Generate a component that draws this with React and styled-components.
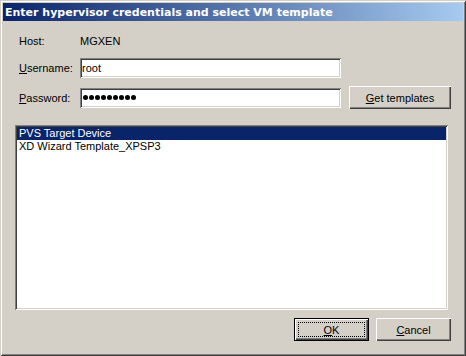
import React from 'react'
import styled, { createGlobalStyle } from 'styled-components'

const GlobalStyle = createGlobalStyle`
  html, body {
    margin: 0;
    padding: 0;
    background: #D4D0C8;
  }
  body {
    font-family: Tahoma, "Liberation Sans", Arial, sans-serif;
    font-size: 11px;
    color: #000;
  }
`

const Window = styled.div`
  width: 466px;
  height: 356px;
  box-sizing: border-box;
  padding: 3px;
  background: #D4D0C8;
  box-shadow:
    inset 1px 1px #D4D0C8,
    inset -1px -1px #404040,
    inset 2px 2px #FFFFFF,
    inset -2px -2px #808080;
  display: flex;
  flex-direction: column;
`

const TitleBar = styled.div`
  height: 18px;
  flex: none;
  display: flex;
  align-items: center;
  padding-left: 2px;
  background: linear-gradient(to right, #0A246A, #A6CAF0);
  color: #fff;
  font-family: "DejaVu Sans", Verdana, sans-serif;
  font-weight: 700;
  font-size: 11px;
  white-space: nowrap;
`

const Body = styled.div`
  flex: 1;
  display: flex;
  flex-direction: column;
  padding: 10px 12px 12px 12px;
`

const Row = styled.div`
  display: flex;
  align-items: center;
  height: ${({ h }) => h || 20}px;
  padding-left: 4px;
  margin-bottom: ${({ mb }) => mb || 0}px;
`

const Label = styled.div`
  width: 61px;
  flex: none;
`

const Field = styled.div`
  width: 261px;
  height: 20px;
  box-sizing: border-box;
  background: #fff;
  padding: 0 2px;
  display: flex;
  align-items: center;
  box-shadow:
    inset 1px 1px #808080,
    inset -1px -1px #FFFFFF,
    inset 2px 2px #404040,
    inset -2px -2px #D4D0C8;
`

const Dots = styled.span`
  display: flex;
  gap: 1px;
  padding-left: 1px;
`

const Dot = styled.i`
  width: 5px;
  height: 5px;
  border-radius: 50%;
  background: #000;
`

const Button = styled.button`
  position: relative;
  width: ${({ w }) => w || 75}px;
  height: 23px;
  box-sizing: border-box;
  margin: 0;
  padding: 0;
  background: #D4D0C8;
  font-family: inherit;
  font-size: 11px;
  color: #000;
  border: ${({ isDefault }) => (isDefault ? '1px solid #000' : 'none')};
  box-shadow:
    inset 1px 1px #FFFFFF,
    inset -1px -1px #404040,
    inset -2px -2px #808080;
  display: flex;
  align-items: center;
  justify-content: center;
  cursor: default;

  &::after {
    content: '';
    display: ${({ isDefault }) => (isDefault ? 'block' : 'none')};
    position: absolute;
    left: 3px;
    top: 3px;
    right: 3px;
    bottom: 3px;
    border: 1px dotted #000;
  }
`

const GetButton = styled(Button)`
  margin-left: 8px;
`

const ListBox = styled.div`
  height: 185px;
  margin-top: 16px;
  margin-right: 3px;
  box-sizing: border-box;
  padding: 2px;
  background: #fff;
  box-shadow:
    inset 1px 1px #808080,
    inset -1px -1px #FFFFFF,
    inset 2px 2px #404040,
    inset -2px -2px #D4D0C8;
`

const Item = styled.div`
  height: 13px;
  line-height: 13px;
  padding-left: 2px;
  white-space: nowrap;
  background: ${({ selected }) => (selected ? '#0A246A' : 'transparent')};
  color: ${({ selected }) => (selected ? '#fff' : '#000')};
`

const Footer = styled.div`
  display: flex;
  justify-content: flex-end;
  gap: 7px;
  margin-top: 8px;
`

const templates = ['PVS Target Device', 'XD Wizard Template_XPSP3']

export default function App() {
  return (
    <>
      <GlobalStyle />
      <Window>
        <TitleBar>Enter hypervisor credentials and select VM template</TitleBar>
        <Body>
          <Row mb={7}>
            <Label>Host:</Label>
            <div>MGXEN</div>
          </Row>
          <Row mb={8}>
            <Label><u>U</u>sername:</Label>
            <Field>root</Field>
          </Row>
          <Row h={23}>
            <Label><u>P</u>assword:</Label>
            <Field>
              <Dots>
                {Array.from({ length: 9 }).map((_, i) => <Dot key={i} />)}
              </Dots>
            </Field>
            <GetButton w={102}><span><u>G</u>et templates</span></GetButton>
          </Row>
          <ListBox>
            {templates.map((t, i) => (
              <Item key={i} selected={i === 0}>{t}</Item>
            ))}
          </ListBox>
          <Footer>
            <Button isDefault><span><u>O</u>K</span></Button>
            <Button><span><u>C</u>ancel</span></Button>
          </Footer>
        </Body>
      </Window>
    </>
  )
}
